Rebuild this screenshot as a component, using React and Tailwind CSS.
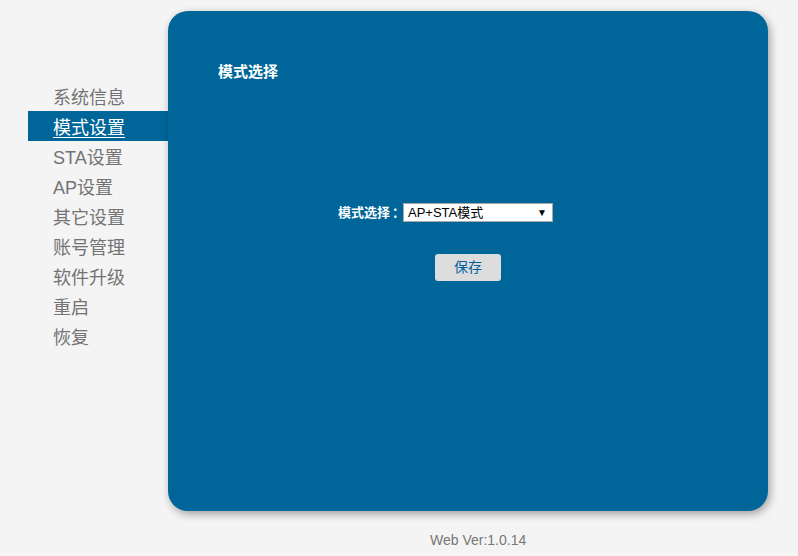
import React from "react";

const menu = ["系统信息", "模式设置", "STA设置", "AP设置", "其它设置", "账号管理", "软件升级", "重启", "恢复"];

export default function App() {
  const font = { fontFamily: '"Liberation Sans", "Noto Sans CJK SC", sans-serif' };
  return (
    <div className="w-[798px] h-[556px] bg-[#f4f4f4] overflow-hidden" style={font}>
      <div className="flex pt-[11px]">
        <ul className="w-[140px] ml-[28px] mt-[70px]">
          {menu.map((m, i) => (
            <li
              key={m}
              className={`h-[30px] leading-[34px] pl-[25px] text-[18px] ${
                i === 1 ? "bg-[#006699] text-white underline underline-offset-[3px]" : "text-[#737373]"
              }`}
            >
              {m}
            </li>
          ))}
        </ul>
        <div className="w-[600px] h-[500px] bg-[#006699] rounded-[20px] shadow-[2px_3px_8px_rgba(0,0,0,0.35)]">
          <h2 className="mt-[51px] ml-[50px] text-[15px] leading-[20px] font-bold text-white">模式选择</h2>
          <div className="flex items-center mt-[121px] ml-[170px]">
            <span className="w-[65px] shrink-0 whitespace-nowrap text-[13px] font-bold text-white">
              模式选择<span className="ml-[2px]">：</span>
            </span>
            <div className="w-[150px] h-[19px] bg-white border border-[#a9a9a9] flex items-center justify-between pl-[4px] pr-[5px] text-[13px] text-black">
              <span>AP+STA模式</span>
              <span className="text-[10px]">▼</span>
            </div>
          </div>
          <div className="flex justify-center mt-[31px]">
            <button className="w-[66px] h-[27px] bg-[#dddddd] rounded-[3px] text-[14px] text-[#00619e]">保存</button>
          </div>
        </div>
      </div>
      <p className="mt-[19px] ml-[430px] text-[14px] text-[#777777]">Web Ver:1.0.14</p>
    </div>
  );
}
